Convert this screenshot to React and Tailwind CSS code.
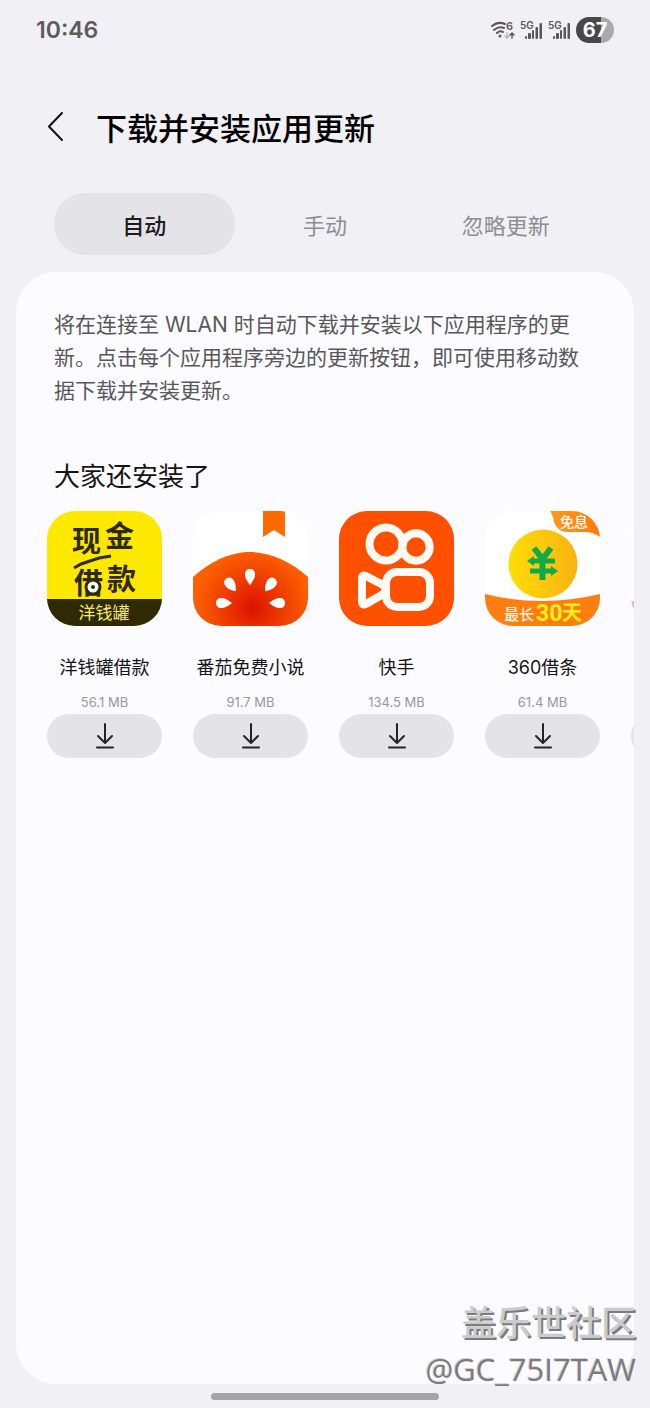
import React, { useState } from 'react';

const TABS = ['自动', '手动', '忽略更新'];

function CashLoanIcon() {
    return (
        <svg viewBox="0 0 115 115" className="w-full h-full font-['Noto_Sans_CJK_SC',sans-serif]">
            <rect width="115" height="115" fill="#fde900" />
            <rect y="88" width="115" height="27" fill="#2f2a05" />
            <g fill="#2f2a05" fontSize="29" fontWeight="700">
                <text x="25" y="41">现</text>
                <text x="58" y="36">金</text>
                <text x="27" y="83">借</text>
                <text x="60" y="79">款</text>
            </g>
            <path d="M27 57L34 53L52 47L64 45" fill="none" stroke="#2f2a05" strokeWidth="3" />
            <circle cx="46" cy="76" r="7" fill="#fff" stroke="#2f2a05" strokeWidth="3" />
            <circle cx="46" cy="76" r="2" fill="#2f2a05" />
            <text x="57" y="108" textAnchor="middle" fontSize="17" fill="#f3e772">洋钱罐</text>
        </svg>
    );
}

function TomatoIcon() {
    const seed = 'M0 8C-4 3-5 0-5-3C-5-6-3-8 0-8S5-6 5-3C5 0 4 3 0 8Z';
    return (
        <svg viewBox="0 0 115 115" className="w-full h-full">
            <defs>
                <radialGradient id="tomato" gradientUnits="userSpaceOnUse" cx="60" cy="97" r="58">
                    <stop offset="0" stopColor="#dc1200" />
                    <stop offset="0.4" stopColor="#ec3200" />
                    <stop offset="1" stopColor="#fd6000" />
                </radialGradient>
            </defs>
            <rect width="115" height="115" fill="#fff" />
            <path d="M70 0H92V26L81 19L70 26Z" fill="#ff6a00" />
            <path d="M0 66C20 48 40 41 57 41S95 48 115 66V115H0Z" fill="url(#tomato)" />
            <g fill="#fff">
                <path d={seed} transform="translate(57 66)" />
                <path d={seed} transform="translate(38 74) rotate(-38)" />
                <path d={seed} transform="translate(77 74) rotate(38)" />
                <path d={seed} transform="translate(31 92) rotate(-90)" />
                <path d={seed} transform="translate(84 92) rotate(90)" />
            </g>
        </svg>
    );
}

function KuaishouIcon() {
    return (
        <svg viewBox="0 0 115 115" className="w-full h-full">
            <rect width="115" height="115" fill="#ff5000" />
            <g fill="none" stroke="#fffaf4" strokeWidth="8" strokeLinejoin="round">
                <circle cx="47" cy="33" r="16.5" />
                <circle cx="77" cy="36" r="13.7" />
                <rect x="47" y="61" width="44" height="35" rx="11" />
                <path d="M23 68Q23 63 27 65L46 75V82L27 93Q23 95 23 90Z" />
            </g>
        </svg>
    );
}

function LoanNoteIcon() {
    return (
        <svg viewBox="0 0 115 115" className="w-full h-full font-['Noto_Sans_CJK_SC',sans-serif]">
            <defs>
                <linearGradient id="coin" x1="0" y1="0" x2="1" y2="0">
                    <stop offset="0" stopColor="#ffdc08" />
                    <stop offset="1" stopColor="#fbb311" />
                </linearGradient>
                <linearGradient id="ribbon" x1="0" y1="0" x2="1" y2="0">
                    <stop offset="0" stopColor="#ff9a1c" />
                    <stop offset="1" stopColor="#ff7a0c" />
                </linearGradient>
            </defs>
            <rect width="115" height="115" fill="#fff" />
            <path d="M65 0H94Q115 2 115 26Q108 21 100 21H84Q72 21 69 11Q68 4 65 0Z" fill="url(#ribbon)" />
            <text x="89" y="16" textAnchor="middle" fontSize="14" fontWeight="500" fill="#fff">免息</text>
            <circle cx="58" cy="53" r="34.5" fill="url(#coin)" />
            <g fill="none" stroke="#12a84c" strokeWidth="5">
                <path d="M49 37L57.500 48L66 37M57.500 47V69" strokeWidth="6" />
                <path d="M46 50H70M45 60H69" />
            </g>
            <path d="M42 50L49 45V55ZM73 60L66 55V65Z" fill="#12a84c" />
            <path d="M0 83Q57 97 115 83V115H0Z" fill="#fe7f10" />
            <text x="19" y="109" fontSize="15" fontWeight="500" fill="#fff3df">最长</text>
            <text x="51" y="110" fontSize="23" fontWeight="700" fill="#ffee1a" className="font-[Roboto,sans-serif]">30</text>
            <text x="77" y="109" fontSize="20" fontWeight="700" fill="#ffee1a">天</text>
        </svg>
    );
}

function NextAppIcon() {
    return (
        <svg viewBox="0 0 115 115" className="w-full h-full">
            <rect width="115" height="115" fill="#fff" />
            <path d="M0 90H4V100Q1 97 0 90Z" fill="#e5b9bf" />
        </svg>
    );
}

const APPS = [
    { id: 1, name: '洋钱罐借款', size: '56.1 MB', Icon: CashLoanIcon },
    { id: 2, name: '番茄免费小说', size: '91.7 MB', Icon: TomatoIcon },
    { id: 3, name: '快手', size: '134.5 MB', Icon: KuaishouIcon },
    { id: 4, name: '360借条', size: '61.4 MB', Icon: LoanNoteIcon },
    { id: 5, name: '', size: '', Icon: NextAppIcon },
];

function SignalIcon() {
    return (
        <svg viewBox="0 0 23 20" className="w-[23px] h-5" fill="#58585b">
            <text x="0" y="9" fontSize="10" fontWeight="600">5G</text>
            <rect x="5" y="16" width="2" height="3" rx="1" />
            <rect x="8" y="13" width="3" height="6" rx="1" />
            <rect x="12" y="10" width="2" height="9" rx="1" />
            <rect x="15.500" y="7" width="2.500" height="12" rx="1" />
            <rect x="19.500" y="3" width="2.500" height="16" rx="1" />
        </svg>
    );
}

function StatusBar() {
    return (
        <div className="h-[60px] px-9 flex items-center justify-between">
            <span className="text-[23px] font-semibold text-[#5c5c5f]">10:46</span>
            <div className="flex items-center gap-[5px]">
                <svg viewBox="0 0 26 20" className="w-[26px] h-5" fill="none" stroke="#58585b" strokeWidth="2" strokeLinecap="round">
                    <path d="M3 6Q9 1 16 4M5 10Q10 6 15 8M8 13Q11 10 14 12" />
                    <circle cx="11" cy="16" r="0.600" />
                    <text x="17" y="10" fontSize="11" fontWeight="600" fill="#58585b" stroke="none">6</text>
                    <path d="M18 13V18M16 16L18 18L20 16" stroke="#b5b5b9" strokeWidth="1.500" />
                    <path d="M23 18V13M21 15L23 13L25 15" strokeWidth="1.500" />
                </svg>
                <SignalIcon />
                <SignalIcon />
                <div className="w-[38px] h-[26px] rounded-full bg-linear-to-r from-[#48484b] from-66% to-[#aaaaae] to-66% flex items-center justify-center text-xl font-bold text-white">
                    67
                </div>
            </div>
        </div>
    );
}

function AppCard({ app }) {
    const { name, size, Icon } = app;
    return (
        <li className="w-[115px] shrink-0 flex flex-col items-center">
            <div className="w-full h-[115px] rounded-[28px] overflow-hidden">
                <Icon />
            </div>
            <span className="mt-7 h-7 text-lg leading-7 text-[#151517] whitespace-nowrap">{name}</span>
            <span className="mt-[11px] h-[18px] text-[13px] leading-[18px] text-[#98989b]">{size}</span>
            <button
                type="button"
                aria-label={`下载 ${name}`}
                className="mt-[3px] w-full h-11 rounded-full bg-[#e4e3e8] flex items-center justify-center"
            >
                <svg viewBox="0 0 20 26" className="w-5 h-[26px]" fill="none" stroke="#242428" strokeWidth="2" strokeLinecap="round" strokeLinejoin="round">
                    <path d="M10 1V19M3 13L10 20L17 13M2 24.500H18" />
                </svg>
            </button>
        </li>
    );
}

export default function App() {
    const [activeTab, setActiveTab] = useState('自动');

    return (
        <div className="relative min-h-screen flex flex-col bg-[#f1f0f5] font-[Inter,'Noto_Sans_CJK_SC',sans-serif]">
            <StatusBar />

            {/* Título */}
            <header className="h-[133px] pl-[46px] flex items-center gap-[30px]">
                <button type="button" aria-label="返回">
                    <svg viewBox="0 0 20 32" className="w-5 h-8" fill="none" stroke="#111" strokeWidth="2" strokeLinecap="round" strokeLinejoin="round">
                        <path d="M16 2L3 15.500L16 29" />
                    </svg>
                </button>
                <h1 className="pt-1 text-[31px] leading-10 font-medium text-black">下载并安装应用更新</h1>
            </header>

            <nav className="mx-[54px] mb-[17px] flex">
                {TABS.map(tab => (
                    <button
                        key={tab}
                        type="button"
                        onClick={() => setActiveTab(tab)}
                        className={`flex-1 h-[62px] pt-1 rounded-full text-[22px] ${activeTab === tab ? 'bg-[#e4e3e8] text-[#1c1c1f] font-medium' : 'text-[#8e8e92]'}`}
                    >
                        {tab}
                    </button>
                ))}
            </nav>

            <main className="mx-4 flex-1 rounded-[40px] bg-[#fcfbff] pt-9 overflow-hidden">
                <p className="mx-[38px] text-[21px] leading-[33px] text-[#58585a]">
                    将在连接至 WLAN 时自动下载并安装以下应用程序的更新。点击每个应用程序旁边的更新按钮，即可使用移动数据下载并安装更新。
                </p>

                <h2 className="mx-[38px] mt-[52px] text-[26px] leading-9 text-[#151517]">大家还安装了</h2>
                <ul className="mt-4 pl-[31px] flex gap-[31px] overflow-hidden">
                    {APPS.map(app => (
                        <AppCard key={app.id} app={app} />
                    ))}
                </ul>
            </main>

            <div className="h-6 flex items-center justify-center">
                <div className="w-[35%] h-[7px] rounded-full bg-[#a5a4a9]" />
            </div>

            {/* Marca de agua */}
            <div className="absolute right-[14px] bottom-4 text-right pointer-events-none">
                <p className="text-[35px] leading-[46px] font-medium text-[#cbcbcd] [text-shadow:2px_2px_0_#7b7b7d]">盖乐世社区</p>
                <p className="font-['Open_Sans',sans-serif] text-[31px] leading-[46px] text-[#7b7b7d] [text-shadow:-1px_-1px_0_#d2d2d4]">@GC_75I7TAW</p>
            </div>
        </div>
    );
}
